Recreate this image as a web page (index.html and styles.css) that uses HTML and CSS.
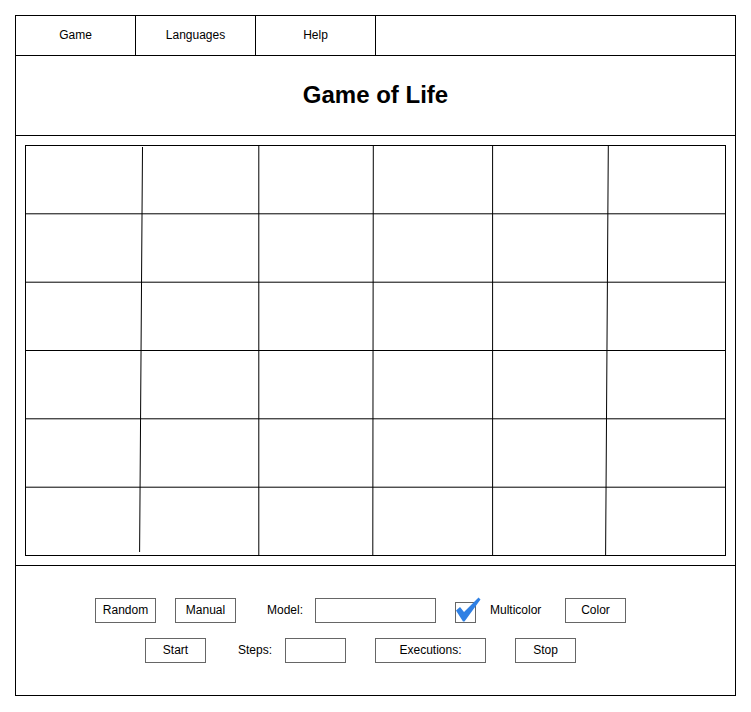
FILE: index.html
```html
<!DOCTYPE html>
<html lang="en">
<head>
<meta charset="utf-8">
<title>Game of Life</title>
<link rel="stylesheet" href="styles.css">
</head>
<body>
<div class="frame">
  <nav class="menu">
    <div class="menu-item">Game</div>
    <div class="menu-item">Languages</div>
    <div class="menu-item">Help</div>
  </nav>
  <header class="title">
    <h1>Game of Life</h1>
  </header>
  <section class="board-area">
    <svg class="board" width="701" height="411" viewBox="0 0 701 411" xmlns="http://www.w3.org/2000/svg">
      <rect x="0.5" y="0.5" width="700" height="410" fill="#fff" stroke="#000" stroke-width="1"/>
      <g stroke="#000" stroke-width="1" fill="none">
        <line x1="0.5" y1="68.8" x2="700.5" y2="68.8"/>
        <line x1="0.5" y1="137.2" x2="700.5" y2="137.2"/>
        <line x1="0.5" y1="205.5" x2="700.5" y2="205.5"/>
        <line x1="0.5" y1="273.8" x2="700.5" y2="273.8"/>
        <line x1="0.5" y1="342.2" x2="700.5" y2="342.2"/>
        <line x1="117.5" y1="2" x2="114.6" y2="407"/>
        <line x1="233.8" y1="0.5" x2="233.8" y2="410.5"/>
        <line x1="348.3" y1="0.5" x2="347.8" y2="410.5"/>
        <line x1="467.6" y1="0.5" x2="467.6" y2="410.5"/>
        <line x1="583.3" y1="1" x2="580.6" y2="410.5"/>
      </g>
    </svg>
  </section>
  <section class="controls">
    <div class="row row-one">
      <div class="btn">Random</div>
      <div class="btn gap">Manual</div>
      <div class="label gap">Model:</div>
      <div class="field field-wide"></div>
      <div class="check gap">
        <svg width="21" height="21" viewBox="0 0 21 21" xmlns="http://www.w3.org/2000/svg">
          <rect x="0.5" y="0.5" width="20" height="20" fill="#fff" stroke="#666" stroke-width="1"/>
          <path d="M1 8.5 L5 5 L9 10 L23.5 -4.5 L25.5 -2.5 L9.5 19.5 L8 19.5 Z" fill="#2f80e4"/>
        </svg>
      </div>
      <div class="check-label">Multicolor</div>
      <div class="btn">Color</div>
    </div>
    <div class="row row-two">
      <div class="btn">Start</div>
      <div class="label gap">Steps:</div>
      <div class="field"></div>
      <div class="btn btn-wide gap-lg">Executions:</div>
      <div class="btn gap-lg">Stop</div>
    </div>
  </section>
</div>
</body>
</html>
```

FILE: styles.css
```css
* {
  box-sizing: border-box;
}

html, body {
  margin: 0;
  padding: 0;
  background: #fff;
}

body {
  font-family: "Liberation Sans", Arial, Helvetica, sans-serif;
  font-size: 12px;
  color: #000;
}

.frame {
  margin: 15px 0 0 15px;
  width: 721px;
  height: 681px;
  border: 1px solid #000;
  display: flex;
  flex-direction: column;
}

.menu {
  height: 40px;
  border-bottom: 1px solid #000;
  display: flex;
}

.menu-item {
  width: 120px;
  border-right: 1px solid #000;
  display: flex;
  align-items: center;
  justify-content: center;
  padding-bottom: 2px;
}

.title {
  height: 80px;
  border-bottom: 1px solid #000;
  display: flex;
  align-items: center;
  justify-content: center;
  padding-bottom: 2px;
}

.title h1 {
  margin: 0;
  font-size: 24px;
  font-weight: bold;
  line-height: 28px;
}

.board-area {
  height: 430px;
  border-bottom: 1px solid #000;
  padding: 9px 0 0 9px;
}

.board {
  display: block;
  overflow: visible;
}

.controls {
  flex: 1;
  padding-top: 32px;
  display: flex;
  flex-direction: column;
  gap: 15px;
}

.row {
  display: flex;
  align-items: center;
  height: 25px;
}

.row-one {
  padding-left: 79px;
}

.row-two {
  padding-left: 129px;
}

.btn {
  width: 61px;
  height: 25px;
  border: 1px solid #666;
  display: flex;
  align-items: center;
  justify-content: center;
  padding-bottom: 2px;
  background: #fff;
}

.btn-wide {
  width: 111px;
}

.gap {
  margin-left: 19px;
}

.gap-lg {
  margin-left: 29px;
}

.label {
  width: 60px;
  text-align: center;
  padding-bottom: 2px;
}

.field {
  width: 61px;
  height: 25px;
  border: 1px solid #666;
  background: #fff;
}

.field-wide {
  width: 121px;
}

.check {
  width: 21px;
  height: 21px;
  margin-top: 3px;
}

.check svg {
  display: block;
  overflow: visible;
}

.check-label {
  width: 89px;
  padding-left: 14px;
  padding-bottom: 2px;
}
```
